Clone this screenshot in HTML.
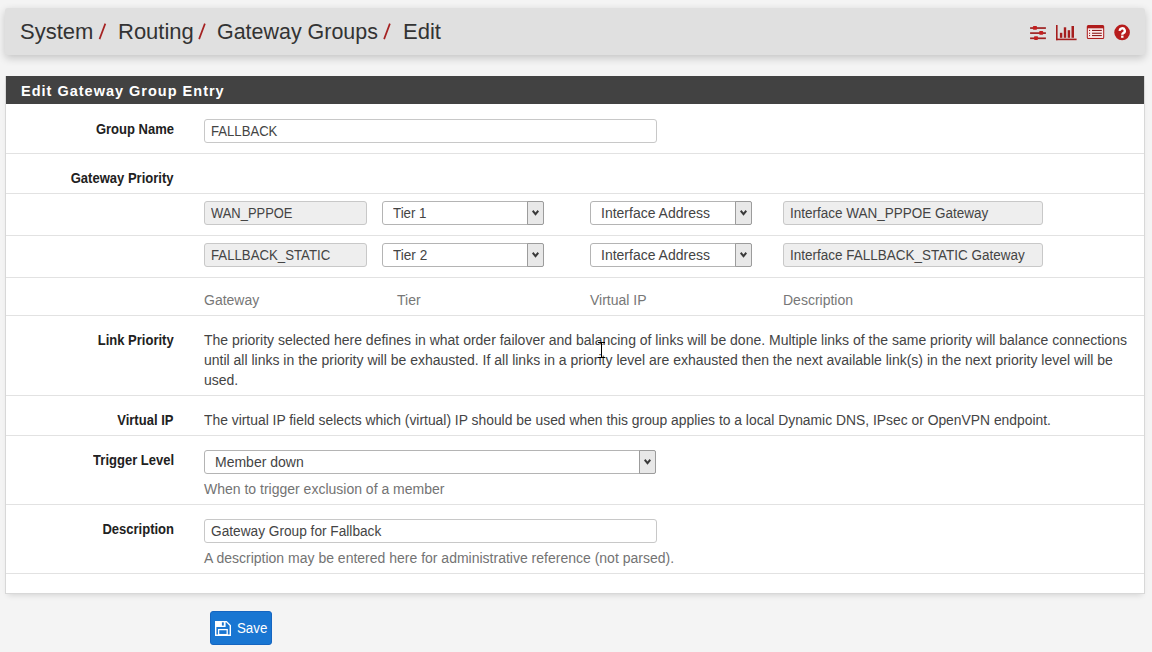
<!DOCTYPE html>
<html><head><meta charset="utf-8">
<style>
*{box-sizing:border-box;margin:0;padding:0}
html,body{width:1152px;height:652px;overflow:hidden}
body{background:#f4f4f4;font-family:"Liberation Sans",sans-serif;position:relative;color:#333}
.a{position:absolute}
.t{position:absolute;white-space:nowrap;line-height:20px;font-size:14px}
.crumb{position:absolute;left:5px;top:8px;width:1140px;height:47px;background:#e0e0e0;border-radius:3px;box-shadow:0 3px 8px rgba(0,0,0,.2)}
.bc{position:absolute;white-space:nowrap;font-size:22px;line-height:30px;color:#333;top:17px}
.sl{color:#b71c1c}
.panel{position:absolute;left:5px;top:76px;width:1140px;height:518px;background:#fff;border:1px solid #d8d8d8;box-shadow:0 4px 6px -3px rgba(0,0,0,.14)}
.ph{position:absolute;left:6px;top:76px;width:1138px;height:28px;background:#424242}
.line{position:absolute;left:6px;width:1138px;height:1px;background:#e2e2e2}
.lbl{position:absolute;right:978.2px;white-space:nowrap;font-size:14px;font-weight:bold;line-height:20px;color:#212121;text-align:right;transform:scaleX(0.93);transform-origin:100% 0}
.inp{position:absolute;height:24px;border:1px solid #c8c8c8;border-radius:3px;background:#fff}
.ro{background:#eee}
.it{position:absolute;left:6px;top:1px;line-height:20px;font-size:14px;color:#444;white-space:nowrap}
.sel{position:absolute;height:24px;border:1px solid #b4b4b4;border-radius:3px;background:#fff}
.sb{position:absolute;right:-1px;top:-1px;width:17px;height:24px;border:1px solid #9c9c9c;border-radius:0 2px 2px 0;background:#e8e8e8}
.help{color:#737373}
.col{color:#777}
</style></head><body>

<div class="crumb"></div>
<div class="bc" style="left:20px">System</div>
<div class="bc" style="left:118px">Routing</div>
<div class="bc" style="left:217px"><span style="display:inline-block;transform:scaleX(0.975);transform-origin:0 0">Gateway Groups</span></div>
<div class="bc" style="left:403px">Edit</div>
<svg class="a" style="left:0;top:0" width="420" height="50" viewBox="0 0 420 50">
  <g stroke="#a52222" stroke-width="1.7" fill="none">
    <line x1="99.5" y1="39.1" x2="105.3" y2="23.6"/>
    <line x1="199.1" y1="39.1" x2="204.9" y2="23.6"/>
    <line x1="384.1" y1="39.1" x2="389.9" y2="23.6"/>
  </g>
</svg>

<!-- icons -->
<svg class="a" style="left:1028px;top:22px" width="110" height="20" viewBox="1028 22 110 20">
  <g fill="#9e2222">
    <rect x="1030.1" y="27.2" width="15.8" height="1.7"/>
    <rect x="1030.1" y="32.25" width="15.8" height="1.7"/>
    <rect x="1030.1" y="37.45" width="15.8" height="1.7"/>
  </g>
  <g fill="#c21f1f">
    <rect x="1032.9" y="26.1" width="4.1" height="3.7" rx="0.8"/>
    <rect x="1039.2" y="31.1" width="4.0" height="3.7" rx="0.8"/>
    <rect x="1034" y="36.2" width="4.0" height="3.7" rx="0.8"/>
  </g>
  <g fill="#a61e1e">
    <rect x="1056" y="25" width="1.6" height="15.2"/>
    <rect x="1056" y="38.6" width="20.6" height="1.6"/>
    <rect x="1059.9" y="32.8" width="2.4" height="5"/>
    <rect x="1063.8" y="27.3" width="2.4" height="10.5"/>
    <rect x="1067.7" y="30.2" width="2.4" height="7.6"/>
    <rect x="1071.5" y="26" width="2.5" height="11.8"/>
  </g>
  <path d="M1088.3 24.9h14.4a1.5 1.5 0 0 1 1.5 1.5v11a1.5 1.5 0 0 1-1.5 1.5h-14.4a1.5 1.5 0 0 1-1.5-1.5v-11a1.5 1.5 0 0 1 1.5-1.5zM1087.9 28.6v9.2h15.2v-9.2z" fill-rule="evenodd" fill="#b01c1c"/>
  <rect x="1087.9" y="28.6" width="15.2" height="9.2" fill="#fbe9e9"/>
  <g fill="#8e1f1f">
    <rect x="1089" y="29.9" width="1.1" height="1.1"/><rect x="1092" y="29.9" width="9.8" height="1.1"/>
    <rect x="1089" y="32.7" width="1.1" height="1.1"/><rect x="1092" y="32.7" width="9.8" height="1.1"/>
    <rect x="1089" y="35.0" width="1.1" height="1.1"/><rect x="1092" y="35.0" width="9.8" height="1.1"/>
  </g>
  <circle cx="1122.1" cy="32.4" r="7.8" fill="#b71c1c"/>
  <path d="M1119.8 30.9A2.5 2.5 0 1 1 1123.6 32.9Q1122.3 33.6 1122.3 34.7" fill="none" stroke="#fff" stroke-width="2.4"/>
  <rect x="1121.1" y="35.6" width="2.4" height="2.2" fill="#fff"/>
</svg>

<div class="panel"></div>
<div class="ph"></div>
<div class="t" style="left:21px;top:81px;font-weight:bold;color:#fff;font-size:14.5px;letter-spacing:1px">Edit Gateway Group Entry</div>

<div class="line" style="top:153px"></div>
<div class="line" style="top:193px"></div>
<div class="line" style="top:235px"></div>
<div class="line" style="top:277px"></div>
<div class="line" style="top:315px"></div>
<div class="line" style="top:395px"></div>
<div class="line" style="top:435px"></div>
<div class="line" style="top:504px"></div>
<div class="line" style="top:573px"></div>

<!-- Group name -->
<div class="lbl" style="top:119px">Group Name</div>
<div class="inp" style="left:204px;top:119px;width:453px"><div class="it"><span style="display:inline-block;transform:scaleX(0.937);transform-origin:0 0">FALLBACK</span></div></div>

<!-- Gateway priority -->
<div class="lbl" style="top:168px">Gateway Priority</div>

<div class="inp ro" style="left:204px;top:201px;width:163px"><div class="it"><span style="display:inline-block;transform:scaleX(0.924);transform-origin:0 0">WAN_PPPOE</span></div></div>
<div class="sel" style="left:382px;top:201px;width:162px"><div class="it" style="left:10px"><span style="display:inline-block;transform:scaleX(0.95);transform-origin:0 0">Tier 1</span></div><div class="sb"><svg style="position:absolute;left:4px;top:8px" width="7" height="6" viewBox="0 0 7 6"><path d="M0 1.5L1.4 0L3.5 2.4L5.6 0L7 1.5L3.5 5.8Z" fill="#3a3a3a"/></svg></div></div>
<div class="sel" style="left:590px;top:201px;width:162px"><div class="it" style="left:10px">Interface Address</div><div class="sb"><svg style="position:absolute;left:4px;top:8px" width="7" height="6" viewBox="0 0 7 6"><path d="M0 1.5L1.4 0L3.5 2.4L5.6 0L7 1.5L3.5 5.8Z" fill="#3a3a3a"/></svg></div></div>
<div class="inp ro" style="left:783px;top:201px;width:260px"><div class="it"><span style="display:inline-block;transform:scaleX(0.964);transform-origin:0 0">Interface WAN_PPPOE Gateway</span></div></div>

<div class="inp ro" style="left:204px;top:243px;width:163px"><div class="it"><span style="display:inline-block;transform:scaleX(0.944);transform-origin:0 0">FALLBACK_STATIC</span></div></div>
<div class="sel" style="left:382px;top:243px;width:162px"><div class="it" style="left:10px"><span style="display:inline-block;transform:scaleX(0.97);transform-origin:0 0">Tier 2</span></div><div class="sb"><svg style="position:absolute;left:4px;top:8px" width="7" height="6" viewBox="0 0 7 6"><path d="M0 1.5L1.4 0L3.5 2.4L5.6 0L7 1.5L3.5 5.8Z" fill="#3a3a3a"/></svg></div></div>
<div class="sel" style="left:590px;top:243px;width:162px"><div class="it" style="left:10px">Interface Address</div><div class="sb"><svg style="position:absolute;left:4px;top:8px" width="7" height="6" viewBox="0 0 7 6"><path d="M0 1.5L1.4 0L3.5 2.4L5.6 0L7 1.5L3.5 5.8Z" fill="#3a3a3a"/></svg></div></div>
<div class="inp ro" style="left:783px;top:243px;width:260px"><div class="it"><span style="display:inline-block;transform:scaleX(0.963);transform-origin:0 0">Interface FALLBACK_STATIC Gateway</span></div></div>

<div class="t col" style="left:204px;top:290px">Gateway</div>
<div class="t col" style="left:397px;top:290px">Tier</div>
<div class="t col" style="left:590px;top:290px">Virtual IP</div>
<div class="t col" style="left:783px;top:290px">Description</div>

<!-- Link priority -->
<div class="lbl" style="top:330px">Link Priority</div>
<div class="t" style="left:204px;top:330px;color:#444">The priority selected here defines in what order failover and balancing of links will be done. Multiple links of the same priority will balance connections</div>
<div class="t" style="left:204px;top:350px;color:#444">until all links in the priority will be exhausted. If all links in a priority level are exhausted then the next available link(s) in the next priority level will be</div>
<div class="t" style="left:204px;top:370px;color:#444">used.</div>

<!-- Virtual IP -->
<div class="lbl" style="top:410px">Virtual IP</div>
<div class="t" style="left:204px;top:410px;color:#444"><span style="display:inline-block;transform:scaleX(0.99);transform-origin:0 0">The virtual IP field selects which (virtual) IP should be used when this group applies to a local Dynamic DNS, IPsec or OpenVPN endpoint.</span></div>

<!-- Trigger level -->
<div class="lbl" style="top:450px">Trigger Level</div>
<div class="sel" style="left:204px;top:450px;width:452px"><div class="it" style="left:10px">Member down</div><div class="sb"><svg style="position:absolute;left:4px;top:8px" width="7" height="6" viewBox="0 0 7 6"><path d="M0 1.5L1.4 0L3.5 2.4L5.6 0L7 1.5L3.5 5.8Z" fill="#3a3a3a"/></svg></div></div>
<div class="t help" style="left:204px;top:479px">When to trigger exclusion of a member</div>

<!-- Description -->
<div class="lbl" style="top:519px">Description</div>
<div class="inp" style="left:204px;top:519px;width:453px"><div class="it"><span style="display:inline-block;transform:scaleX(0.977);transform-origin:0 0">Gateway Group for Fallback</span></div></div>
<div class="t help" style="left:204px;top:548px">A description may be entered here for administrative reference (not parsed).</div>

<!-- cursor -->
<div class="a" style="left:601px;top:342px;width:1px;height:16px;background:#000"></div>
<div class="a" style="left:598px;top:342px;width:7px;height:1px;background:#000"></div>
<div class="a" style="left:598px;top:357px;width:7px;height:1px;background:#000"></div>

<!-- Save -->
<div class="a" style="left:210px;top:611px;width:62px;height:34px;background:#1976d2;border:1px solid #1565c0;border-radius:3px"></div>
<svg class="a" style="left:215px;top:620px" width="17" height="17" viewBox="0 0 17 17">
  <path d="M0.7 1.6H11.4L15.3 5.5V15.2H0.7Z" fill="none" stroke="#fff" stroke-width="1.4"/>
  <rect x="1" y="1.4" width="9.6" height="5.6" fill="#fff"/>
  <rect x="6.9" y="2.3" width="1.9" height="3.3" fill="#1976d2"/>
  <rect x="3.6" y="9.6" width="8.6" height="5" fill="none" stroke="#fff" stroke-width="1.3"/>
</svg>
<div class="t" style="left:237px;top:618px;color:#fff"><span style="display:inline-block;transform:scaleX(0.95);transform-origin:0 0">Save</span></div>

</body></html>
